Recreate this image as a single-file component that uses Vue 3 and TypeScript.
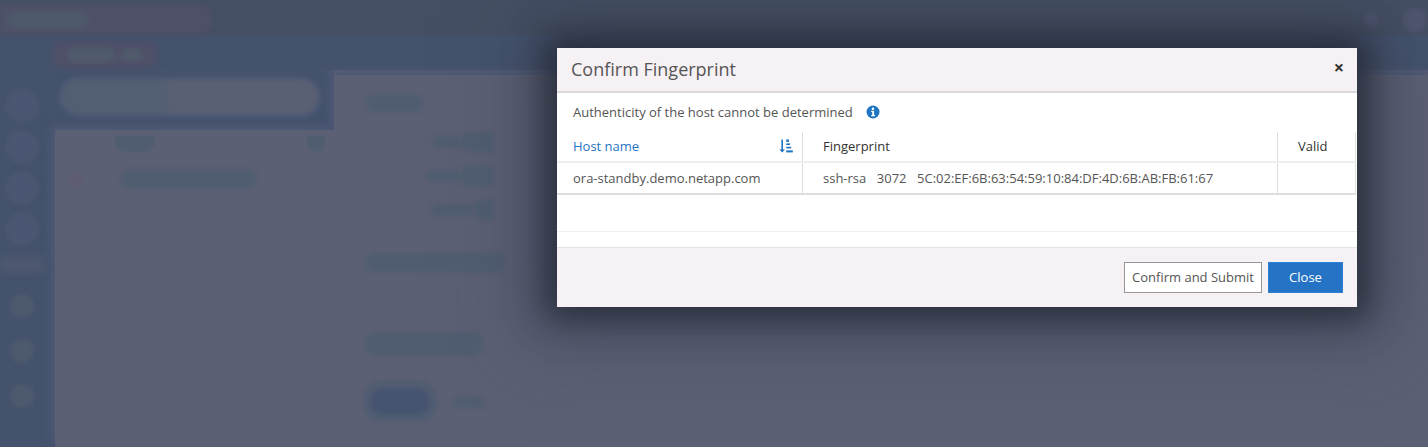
<script setup lang="ts">
const sideDots = [0, 1, 2, 3]
const lowerDots = [0, 1, 2]
const rightBlobs = [
  { key: 'a', small: 26, big: 34 },
  { key: 'b', small: 32, big: 34 },
  { key: 'c', small: 42, big: 20 },
]
</script>

<template>
  <div class="page">
    <!-- blurred page behind the dialog -->
    <div class="backdrop">
      <header class="topbar">
        <div class="brand"><span class="brand-inner"></span></div>
        <div class="top-tools">
          <span class="tool small"></span>
          <span class="tool"></span>
        </div>
      </header>
      <div class="subbar">
        <div class="crumb"><span class="crumb-a"></span><span class="crumb-b"></span></div>
      </div>
      <div class="workspace">
        <aside class="sidebar">
          <span v-for="d in sideDots" :key="d" class="side-dot"></span>
          <div class="side-gap"></div>
          <span v-for="d in lowerDots" :key="'l' + d" class="side-dot low"></span>
        </aside>
        <main class="content">
          <div class="left-col">
            <div class="search"><span class="search-fill"></span></div>
            <div class="list">
              <div class="list-head"><span class="lh-a"></span><span class="lh-b"></span></div>
              <div class="list-row"><span class="lr-dot"></span><span class="lr-bar"></span></div>
            </div>
          </div>
          <div class="right-col">
            <span class="heading-blob"></span>
            <div class="right-rows">
              <div v-for="b in rightBlobs" :key="b.key" class="right-row">
                <span class="rr-s" :style="{ width: b.small + 'px' }"></span>
                <span class="rr-b" :style="{ width: b.big + 'px' }"></span>
              </div>
            </div>
            <span class="wide-blob one"></span>
            <span class="wide-blob two"></span>
            <div class="btn-blobs">
              <span class="btn-blob"></span>
              <span class="btn-link"></span>
            </div>
          </div>
        </main>
      </div>
    </div>

    <!-- dialog -->
    <section class="dialog">
      <div class="dialog-head">
        <h2>Confirm Fingerprint</h2>
        <span class="close-x">×</span>
      </div>
      <div class="dialog-body">
        <p class="note">
          Authenticity of the host cannot be determined
          <svg class="info" viewBox="0 0 14 14" width="14" height="14">
            <circle cx="7" cy="7" r="6.5" fill="#1f74c4" />
            <circle cx="7" cy="3.7" r="1.3" fill="#fff" />
            <path d="M5.2 5.7h2.9v4.4h1v1.2H5.2v-1.2h1V6.9h-1z" fill="#fff" />
          </svg>
        </p>
        <div class="table">
          <div class="tr head">
            <div class="td c1 sort">
              <span>Host name</span>
              <svg viewBox="0 0 14 14" width="14" height="14">
                <path d="M2.4 0.5h1.6v10h2l-2.8 3-2.8-3h2z" fill="#1f74c4" />
                <rect x="7.2" y="0.5" width="2.8" height="2.4" fill="#1f74c4" />
                <rect x="7.2" y="4.4" width="3.8" height="1.6" fill="#1f74c4" />
                <rect x="7.2" y="7.8" width="5" height="1.6" fill="#1f74c4" />
                <rect x="7.2" y="11.4" width="6.6" height="2" fill="#1f74c4" />
              </svg>
            </div>
            <div class="td c2">Fingerprint</div>
            <div class="td c3">Valid</div>
          </div>
          <div class="tr row">
            <div class="td c1">ora-standby.demo.netapp.com</div>
            <div class="td c2 print">
              <span>ssh-rsa</span><span>3072</span><span>5C:02:EF:6B:63:54:59:10:84:DF:4D:6B:AB:FB:61:67</span>
            </div>
            <div class="td c3"></div>
          </div>
        </div>
        <div class="empty-row"></div>
        <div class="empty-tail"></div>
      </div>
      <div class="dialog-foot">
        <button class="btn ghost">Confirm and Submit</button>
        <button class="btn primary">Close</button>
      </div>
    </section>
  </div>
</template>

<style>
html,
body {
  margin: 0;
  background: #5c6074;
}
</style>

<style scoped>
.page {
  position: relative;
  width: 1428px;
  height: 447px;
  overflow: hidden;
  background: #5c6074;
  font-family: 'Open Sans', 'Noto Sans', sans-serif;
}

.backdrop {
  display: flex;
  flex-direction: column;
  height: 100%;
}

.topbar {
  flex: 0 0 35px;
  background: #454f63;
  padding-top: 5px;
  box-sizing: border-box;
  display: flex;
  justify-content: space-between;
  align-items: flex-start;
}

.brand {
  width: 212px;
  height: 29px;
  background: #4e5069;
  border-radius: 0 12px 12px 0;
  filter: blur(2px);
  display: flex;
  align-items: center;
  padding-left: 6px;
  box-sizing: border-box;
}

.brand-inner {
  width: 82px;
  height: 16px;
  background: #4e5a6b;
  border-radius: 8px;
  filter: blur(2px);
}

.top-tools {
  display: flex;
  align-items: center;
  gap: 25px;
  padding: 3px 1px 0 0;
}

.tool {
  width: 24px;
  height: 24px;
  border-radius: 50%;
  background: #4f5670;
  filter: blur(2px);
}

.tool.small {
  width: 14px;
  height: 14px;
}

.subbar {
  flex: 0 0 35px;
  background: #44526c;
  padding: 6px 0 0 52px;
  box-sizing: border-box;
}

.crumb {
  width: 105px;
  height: 27px;
  border-radius: 8px;
  background: #4e5069;
  display: flex;
  align-items: center;
  gap: 6px;
  padding-left: 15px;
  box-sizing: border-box;
  filter: blur(2px);
}

.crumb-a {
  width: 48px;
  height: 16px;
  border-radius: 8px;
  background: #4f5a6b;
}

.crumb-b {
  width: 22px;
  height: 12px;
  border-radius: 6px;
  background: #4f5a6b;
}

.workspace {
  flex: 1;
  display: flex;
  min-height: 0;
}

.sidebar {
  flex: 0 0 44px;
  background: #44526c;
  display: flex;
  flex-direction: column;
  align-items: center;
  gap: 13px;
  padding-top: 22px;
  box-sizing: border-box;
}

.side-dot {
  flex: none;
  width: 28px;
  height: 28px;
  border-radius: 50%;
  background: #4a5672;
  box-shadow: 0 0 0 2px #4f5a6e;
  filter: blur(2px);
}

.side-dot.low {
  width: 24px;
  height: 24px;
  margin-top: 8px;
  background: #4d5a6e;
  box-shadow: none;
}

.side-gap {
  flex: 0 0 17px;
  width: 100%;
  background: #4d586e;
  filter: blur(3px);
}

.content {
  flex: 1;
  display: flex;
  min-width: 0;
}

.left-col {
  flex: 0 0 290px;
  display: flex;
  flex-direction: column;
  background: #44526c;
}

.search {
  flex: 0 0 60px;
  padding: 10px 0 0 18px;
  box-sizing: border-box;
  box-shadow: inset -6px 0 6px #4d5874;
}

.search-fill {
  display: block;
  width: 256px;
  height: 34px;
  border-radius: 17px;
  background: linear-gradient(90deg, #525f73 0 38%, #5a6073 44%);
  box-shadow: 0 0 0 4px #4c5874;
  filter: blur(2px);
}

.list {
  flex: 1;
  background: #5c6074;
  box-shadow: -5px -5px 7px #4d5874;
  padding: 8px 0 0 12px;
  margin-left: 11px;
}

.list-head {
  display: flex;
  justify-content: space-between;
  padding: 0 0 0 48px;
  width: 210px;
}

.lh-a {
  width: 40px;
  height: 16px;
  margin-top: -2px;
  border-radius: 0 0 10px 10px;
  background: #505d71;
  filter: blur(1px);
}

.lh-b {
  width: 18px;
  height: 16px;
  margin-top: -2px;
  border-radius: 0 0 9px 9px;
  background: #505d71;
  filter: blur(1px);
}

.list-row {
  display: flex;
  align-items: center;
  gap: 38px;
  margin-top: 17px;
}

.lr-dot {
  width: 14px;
  height: 16px;
  margin-left: 2px;
  border-radius: 50%;
  background: #5e5c72;
  filter: blur(2px);
}

.lr-bar {
  width: 136px;
  height: 20px;
  border-radius: 10px;
  background: #505d71;
  filter: blur(2px);
}

.right-col {
  flex: 1;
  display: flex;
  flex-direction: column;
  align-items: flex-start;
  padding: 19px 0 0 31px;
  background: #5c6074;
  box-shadow: 0 -5px 7px #4d5874;
  clip-path: inset(-12px 0 0 0);
  margin-top: 5px;
}

.heading-blob {
  width: 58px;
  height: 19px;
  border-radius: 10px;
  background: #505d71;
  filter: blur(2px);
}

.right-rows {
  display: flex;
  flex-direction: column;
  align-items: flex-end;
  width: 128px;
  gap: 14px;
  margin-top: 19px;
}

.right-row {
  display: flex;
  align-items: center;
}

.rr-s {
  height: 12px;
  border-radius: 6px;
  background: #505d71;
  filter: blur(2px);
}

.rr-b {
  height: 20px;
  border-radius: 10px 0 0 10px;
  background: #505d71;
  filter: blur(2px);
}

.wide-blob {
  display: block;
  height: 20px;
  border-radius: 10px;
  background: #505d71;
  filter: blur(2px);
}

.wide-blob.one {
  width: 140px;
  margin-top: 33px;
}

.wide-blob.two {
  width: 118px;
  height: 24px;
  margin-top: 59px;
}

.btn-blobs {
  display: flex;
  align-items: center;
  gap: 24px;
  margin-top: 33px;
  margin-left: 6px;
}

.btn-blob {
  width: 58px;
  height: 25px;
  border-radius: 10px;
  background: #44536f;
  box-shadow: 0 0 0 8px #505c72;
  filter: blur(2px);
}

.btn-link {
  width: 30px;
  height: 12px;
  border-radius: 6px;
  background: #505d71;
  filter: blur(2px);
}

/* dialog */
.dialog {
  position: absolute;
  left: 557px;
  top: 48px;
  width: 800px;
  height: 259px;
  display: flex;
  flex-direction: column;
  background: #fff;
  color: #555;
  box-shadow: 0 0 30px 12px rgba(30, 34, 46, 0.72), 0 0 70px 30px rgba(56, 64, 84, 0.55);
}

.dialog-head {
  flex: 0 0 45px;
  box-sizing: border-box;
  display: flex;
  align-items: center;
  justify-content: space-between;
  padding: 0 13px 2px 14px;
  background: #f5f1f5;
  border-bottom: 2px solid #d9d9d9;
}

.dialog-head h2 {
  margin: 0;
  font-size: 18px;
  font-weight: 400;
  color: #555;
}

.close-x {
  font-size: 18px;
  font-weight: 700;
  line-height: 1;
  color: #333;
  margin-bottom: 4px;
}

.dialog-body {
  flex: 1;
  display: flex;
  flex-direction: column;
}

.note {
  flex: 0 0 39px;
  margin: 0;
  padding-left: 16px;
  display: flex;
  align-items: center;
  gap: 13px;
  font-size: 13px;
  color: #555;
  box-sizing: border-box;
  padding-bottom: 1px;
}

.info {
  margin-top: -1px;
}

.table {
  margin-right: 1px;
}

.tr {
  display: grid;
  grid-template-columns: 246px 475px 78px;
  box-sizing: border-box;
}

.tr.head {
  height: 31px;
  border-bottom: 2px solid #eee;
  color: #333;
}

.tr.head .td {
  padding-bottom: 2px;
}

.tr.row {
  height: 32px;
  border-bottom: 2px solid #ddd;
}

.td {
  box-sizing: border-box;
  font-size: 13px;
  display: flex;
  align-items: center;
  border-right: 1px solid #ddd;
  padding-left: 20px;
  white-space: nowrap;
}

.td.c1 {
  padding-left: 16px;
}

.sort {
  justify-content: space-between;
  padding-right: 9px;
  color: #1f74c4;
}

.print {
  gap: 10.5px;
}

.empty-row {
  flex: 0 0 36px;
  border-bottom: 1px solid #eee;
}

.empty-tail {
  flex: 1;
}

.dialog-foot {
  flex: 0 0 60px;
  box-sizing: border-box;
  display: flex;
  justify-content: flex-end;
  align-items: flex-start;
  gap: 6px;
  padding: 14px 14px 0 0;
  background: #f5f1f5;
  border-top: 1px solid #e4e4e4;
}

.btn {
  height: 31px;
  box-sizing: border-box;
  font-family: inherit;
  font-size: 13px;
  padding: 0 0 2px;
}

.ghost {
  width: 138px;
  background: #fff;
  border: 1px solid #979797;
  color: #555;
}

.primary {
  width: 75px;
  background: #2573c4;
  border: 1px solid #2d80d8;
  color: #fff;
}
</style>
